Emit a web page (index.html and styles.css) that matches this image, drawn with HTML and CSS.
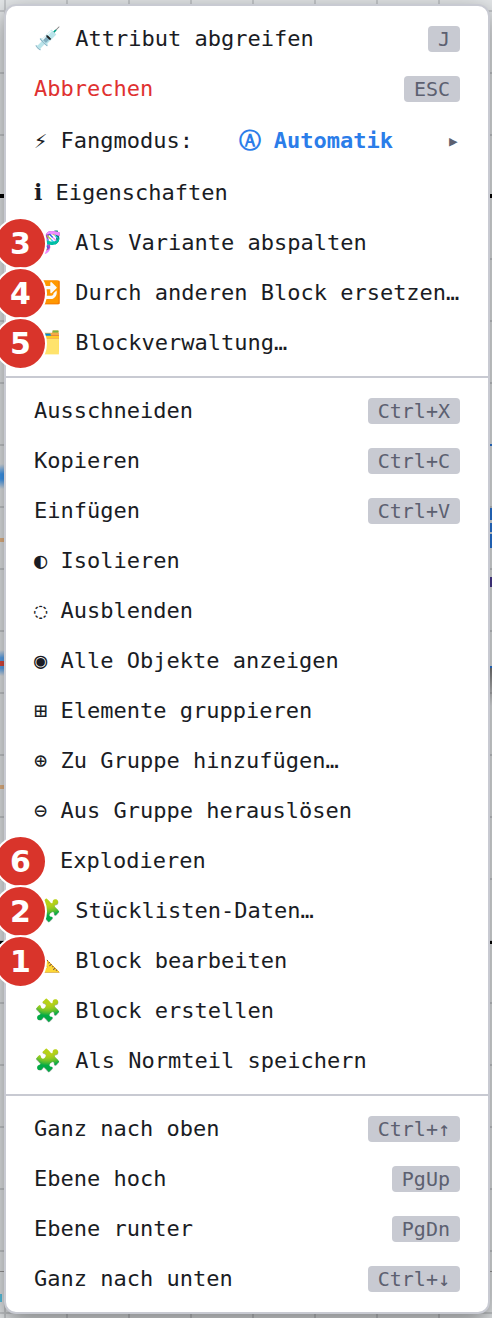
FILE: index.html
```
<!DOCTYPE html>
<html lang="de">
<head>
    <meta charset="UTF-8">
    <meta name="viewport" content="width=device-width, initial-scale=1.0">
    <title>Kontextmenü</title>
    <link rel="stylesheet" href="styles.css">
</head>
<body>

    <div class="menu">
        <button class="item"><span><span class="emoji">💉</span> Attribut abgreifen</span><kbd>J</kbd></button>
        <button class="item cancel"><span>Abbrechen</span><kbd>ESC</kbd></button>
        <button class="item snap"><span>⚡&#xFE0E; Fangmodus:</span><span class="mode">Ⓐ Automatik</span><span class="arrow">▸</span></button>
        <button class="item"><span><span class="info">i</span> Eigenschaften</span></button>
        <button class="item"><span><span class="emoji">🧬</span> Als Variante abspalten</span><span class="badge">3</span></button>
        <button class="item"><span><span class="emoji">🔁</span> Durch anderen Block ersetzen…</span><span class="badge">4</span></button>
        <button class="item"><span><span class="emoji">🗂️</span> Blockverwaltung…</span><span class="badge">5</span></button>

        <hr>

        <button class="item"><span>Ausschneiden</span><kbd>Ctrl+X</kbd></button>
        <button class="item"><span>Kopieren</span><kbd>Ctrl+C</kbd></button>
        <button class="item"><span>Einfügen</span><kbd>Ctrl+V</kbd></button>
        <button class="item"><span>◐ Isolieren</span></button>
        <button class="item"><span>◌ Ausblenden</span></button>
        <button class="item"><span>◉ Alle Objekte anzeigen</span></button>
        <button class="item"><span>⊞ Elemente gruppieren</span></button>
        <button class="item"><span>⊕ Zu Gruppe hinzufügen…</span></button>
        <button class="item"><span>⊖ Aus Gruppe herauslösen</span></button>
        <button class="item no-icon"><span>Explodieren</span><span class="badge">6</span></button>
        <button class="item"><span><span class="emoji">🧩</span> Stücklisten-Daten…</span><span class="badge">2</span></button>
        <button class="item"><span><span class="emoji">📐</span> Block bearbeiten</span><span class="badge">1</span></button>
        <button class="item"><span><span class="emoji">🧩</span> Block erstellen</span></button>
        <button class="item"><span><span class="emoji">🧩</span> Als Normteil speichern</span></button>

        <hr>

        <button class="item"><span>Ganz nach oben</span><kbd>Ctrl+↑</kbd></button>
        <button class="item"><span>Ebene hoch</span><kbd>PgUp</kbd></button>
        <button class="item"><span>Ebene runter</span><kbd>PgDn</kbd></button>
        <button class="item"><span>Ganz nach unten</span><kbd>Ctrl+↓</kbd></button>
    </div>

</body>
</html>
```
FILE: styles.css
```
* {
    margin: 0;
    padding: 0;
    box-sizing: border-box;
}

/* Drawing canvas behind the menu: object edges first, then the grid */
body {
    padding: 4px 2px 4px 4px;
    background-color: #e4e7e9;
    background-image:
        linear-gradient(#000, #000),
        linear-gradient(#000, #000),
        linear-gradient(#e0483c, #e0483c),
        linear-gradient(transparent, #3d9bf5 40%, #3d9bf5 60%, transparent),
        linear-gradient(transparent, #5aa5f0 30%, #5aa5f0 70%, transparent),
        linear-gradient(#e8b888, #e8b888),
        linear-gradient(#e8b888, #e8b888),
        linear-gradient(#2a78dc, #2a78dc),
        linear-gradient(#2a78dc 12px, transparent 12px, transparent 15px, #2a78dc 15px, #2a78dc 24px, transparent 24px, transparent 26px, #2a78dc 26px),
        linear-gradient(#4a3a90, #4a3a90),
        linear-gradient(#2a78dc 2px, #777 2px, transparent),
        linear-gradient(#5cc8e8, #5cc8e8),
        linear-gradient(#999, #999),
        repeating-linear-gradient(transparent 0 10px, #c6c9cc 10px 12px, transparent 12px 62px),
        repeating-linear-gradient(90deg, transparent 0 4px, #c6c9cc 4px 6px, transparent 6px 62px);
    background-position:
        0 194px,
        0 941px,
        0 661px,
        0 464px,
        0 650px,
        0 538px,
        0 785px,
        right 444px,
        right 508px,
        right 577px,
        right 666px,
        0 1294px,
        0 1271px,
        0 0,
        0 0;
    background-size:
        100% 4px,
        100% 3px,
        4px 5px,
        4px 25px,
        4px 26px,
        4px 4px,
        4px 4px,
        2px 2px,
        2px 40px,
        2px 10px,
        2px 40px,
        2px 8px,
        100% 1px,
        auto,
        auto;
    background-repeat: no-repeat;
    overflow-x: hidden;
    font-family: "DejaVu Sans Mono", monospace;
}

.menu {
    padding: 8px 0;
    background-color: #fff;
    border: 2px solid #c8cad2;
    border-radius: 12px;
    box-shadow: 0 8px 24px rgba(0, 0, 0, 0.45);
}

.item {
    position: relative;
    display: flex;
    justify-content: space-between;
    align-items: center;
    width: 100%;
    height: 50px;
    padding: 0 28px;
    border: none;
    background: none;
    color: #1a1c24;
    font-family: inherit;
    font-size: 22px;
    line-height: 26px;
    text-align: left;
    white-space: nowrap;
    cursor: pointer;
}

.emoji {
    display: inline-block;
    width: 28px;
}

.info {
    font-family: "DejaVu Serif", serif;
    font-weight: bold;
    line-height: 1;
}

.cancel {
    color: #e03131;
}

.snap {
    height: 54px;
}

.no-icon {
    padding-left: 54px;
}

.mode {
    color: #2b7de9;
    font-weight: bold;
}

.arrow {
    margin-left: 8px;
    color: #5c6070;
}

kbd {
    padding: 2px 10px;
    background-color: #c8cad2;
    border-radius: 4px;
    color: #5c6070;
    font-family: inherit;
    font-size: 20px;
    line-height: 22px;
}

hr {
    margin: 8px 0;
    border: none;
    border-top: 2px solid #c8cad2;
}

/* Numbered markers over the left edge */
.badge {
    position: absolute;
    top: -1px;
    left: -12px;
    width: 53px;
    height: 53px;
    border: 2px solid #fff;
    border-radius: 50%;
    background-color: #d9342b;
    color: #fff;
    font-family: "DejaVu Sans", sans-serif;
    font-size: 30px;
    font-weight: bold;
    line-height: 49px;
    text-align: center;
}
```
